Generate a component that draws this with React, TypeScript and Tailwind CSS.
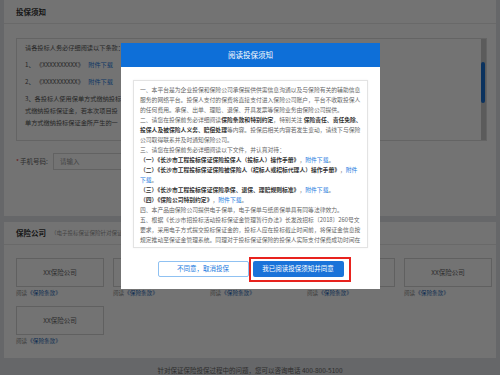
import React from 'react'

type Seg = [string, 'n' | 'b' | 'a']

// Lines of the notice text as they wrap in the dialog box.
const NOTICE: Seg[][] = [
  [['一、本平台是为企业投保和保险公司承保提供供需信息沟通以及与保险有关的辅助信息', 'n']],
  [['服务的网络平台。投保人支付的保费将直接支付进入保险公司账户，平台不收取投保人', 'n']],
  [['的任何费用。承保、出单、理赔、退保、开具发票等保险业务由保险公司提供。', 'n']],
  [
    ['二、请您在投保前务必详细阅读', 'n'],
    ['保险条款和特别约定', 'b'],
    ['，特别关注 ', 'n'],
    ['保险责任、责任免除、', 'b'],
  ],
  [
    ['投保人及被保险人义务、赔偿处理', 'b'],
    ['等内容。投保后相关内容若发生变动，请线下与保险', 'n'],
  ],
  [['公司取得联系并及时通知保险公司。', 'n']],
  [['三、请您在投保前务必详细阅读以下文件，并认真对待：', 'n']],
  [
    ['（一）《长沙市工程投标保证保险投保人（投标人）操作手册》', 'b'],
    ['，', 'n'],
    ['附件下载', 'a'],
    ['。', 'n'],
  ],
  [
    ['（二）《长沙市工程投标保证保险被保险人（招标人或招标代理人）操作手册》', 'b'],
    ['，', 'n'],
    ['附件', 'a'],
  ],
  [['下载', 'a'], ['。', 'n']],
  [
    ['（三）《长沙市工程投标保证保险承保、退保、理赔规则标准》', 'b'],
    ['，', 'n'],
    ['附件下载', 'a'],
    ['。', 'n'],
  ],
  [['（四）《保险公司特别约定》', 'b'], ['，', 'n'], ['附件下载', 'a'], ['。', 'n']],
  [['四、本产品由保险公司提供电子保单，电子保单与纸质保单具有同等法律效力。', 'n']],
  [['五、根据《长沙市招投标活动投标保证金管理暂行办法》长发改招标〔2018〕260号文', 'n']],
  [['要求，采用电子方式提交投标保证金的，投标人应在投标截止时间前，将保证金信息按', 'n']],
  [['规定推动至保证金管理系统。同理对于投标保证保险的投保人实际支付保费成功时间在', 'n']],
]

const segClass = {
  n: 'text-[#666]',
  b: 'font-bold text-[#333]',
  a: 'text-[#1a7ae0]',
}

function CompanyCard() {
  return (
    <div className="w-[88px]">
      <div className="flex h-[29px] items-center justify-center border border-[#d4d4d4] text-[6.5px] text-[#666]">
        XX保险公司
      </div>
      <div className="mt-[2px] h-[9px] text-[5.6px] leading-[9px] text-[#888]">
        阅读<span className="text-[#1a5fb4]">《保险条款》</span>
      </div>
    </div>
  )
}

export default function App() {
  return (
    <div className="relative h-[375px] w-[500px] overflow-hidden bg-[#e2e4e8] font-['Noto_Sans_CJK_SC','Noto_Sans',sans-serif]">
      <div className="px-[4px]">
        {/* 投保须知 */}
        <div className="h-[216px] bg-white">
          <div className="flex h-[24px] items-center border-b border-[#e8e8e8] pl-[12px] text-[7.5px] font-bold text-[#333]">
            投保须知
          </div>
          <div className="px-[12px] pt-[14px]">
            <div className="relative h-[103px] w-[471px] border border-[#dedede] pl-[8px] pt-[3px] text-[6.2px] leading-[12px] text-[#555]">
              <div className="mb-[5px]">请各投标人务必仔细阅读以下条款：</div>
              <div className="mb-[5px]">
                1、 《XXXXXXXXXX》 <span className="ml-[3px] text-[#1a7ae0]">附件下载</span>
              </div>
              <div className="mb-[5px]">
                2、 《XXXXXXXXXX》 <span className="ml-[3px] text-[#1a7ae0]">附件下载</span>
              </div>
              <div>3、各投标人使用保单方式缴纳投标</div>
              <div>式缴纳投标保证金，若本次项目投</div>
              <div>单方式缴纳投标保证金所产生的一</div>
              <div className="absolute right-0 top-0 h-full w-[5px] bg-[#c9c9c9]">
                <div className="mt-[23px] h-[41px] w-[4px] rounded-full bg-[#1a6fd0]" />
              </div>
            </div>
            <div className="mt-[12px] flex items-center">
              <span className="text-[6.5px] text-[#e33]">*</span>
              <span className="ml-[1px] w-[33px] text-[6.5px] text-[#666]">手机号码:</span>
              <div className="flex h-[17px] w-[200px] items-center border border-[#d9d9d9] pl-[6px] text-[6.5px] text-[#999]">
                请输入
              </div>
            </div>
          </div>
        </div>

        {/* 保险公司 */}
        <div className="mt-[6px] bg-white pb-[12px]">
          <div className="flex h-[23px] items-center border-b border-[#e8e8e8] pl-[12px]">
            <span className="text-[7.5px] font-bold text-[#333]">保险公司</span>
            <span className="ml-[5px] text-[5.5px] text-[#999]">（电子投标保证保险针对保证金缴纳方式为保险的项目）</span>
          </div>
          <div className="grid grid-cols-[repeat(5,88px)] gap-x-[9px] gap-y-[8px] px-[12px] pt-[13px]">
            <CompanyCard />
            <CompanyCard />
            <CompanyCard />
            <CompanyCard />
            <CompanyCard />
            <CompanyCard />
          </div>
        </div>

        <div className="mt-[8px] text-center text-[6.5px] leading-[8px] text-[#666]">
          针对保证保险投保过程中的问题，您可以咨询电话 400-800-5100
        </div>
      </div>

      {/* overlay */}
      <div className="absolute inset-0 bg-black/55" />

      {/* dialog */}
      <div className="absolute left-[121px] top-[43px] w-[259px] bg-white pb-[12px]">
        <div className="flex h-[24px] items-center justify-center bg-[#0e6fd8] text-[7.5px] text-white">
          阅读投保须知
        </div>
        <div className="mx-[12px] mt-[13px] h-[168px] border border-[#e3e3e3] px-[6px] pt-[4px] shadow-[0_0_2px_rgba(0,0,0,0.06)]">
          {NOTICE.map((line, i) => (
            <div key={i} className="whitespace-nowrap text-[5.8px] leading-[10px]">
              {line.map(([text, kind], j) => (
                <span key={j} className={segClass[kind]}>
                  {text}
                </span>
              ))}
            </div>
          ))}
        </div>
        <div className="mt-[13px] flex justify-center gap-[4px]">
          <button className="flex h-[16px] w-[91px] items-center justify-center rounded-[2px] border border-[#8fc1f2] text-[6.5px] text-[#1a7ae0]">
            不同意，取消投保
          </button>
          <div className="relative">
            <button className="flex h-[16px] w-[91px] items-center justify-center rounded-[2px] bg-[#1a73d9] text-[6.5px] text-white">
              我已阅读投保须知并同意
            </button>
            <span className="absolute -bottom-[5px] -left-[4px] -right-[7px] -top-[4px] border-2 border-[#e8231e]" />
          </div>
        </div>
      </div>
    </div>
  )
}
